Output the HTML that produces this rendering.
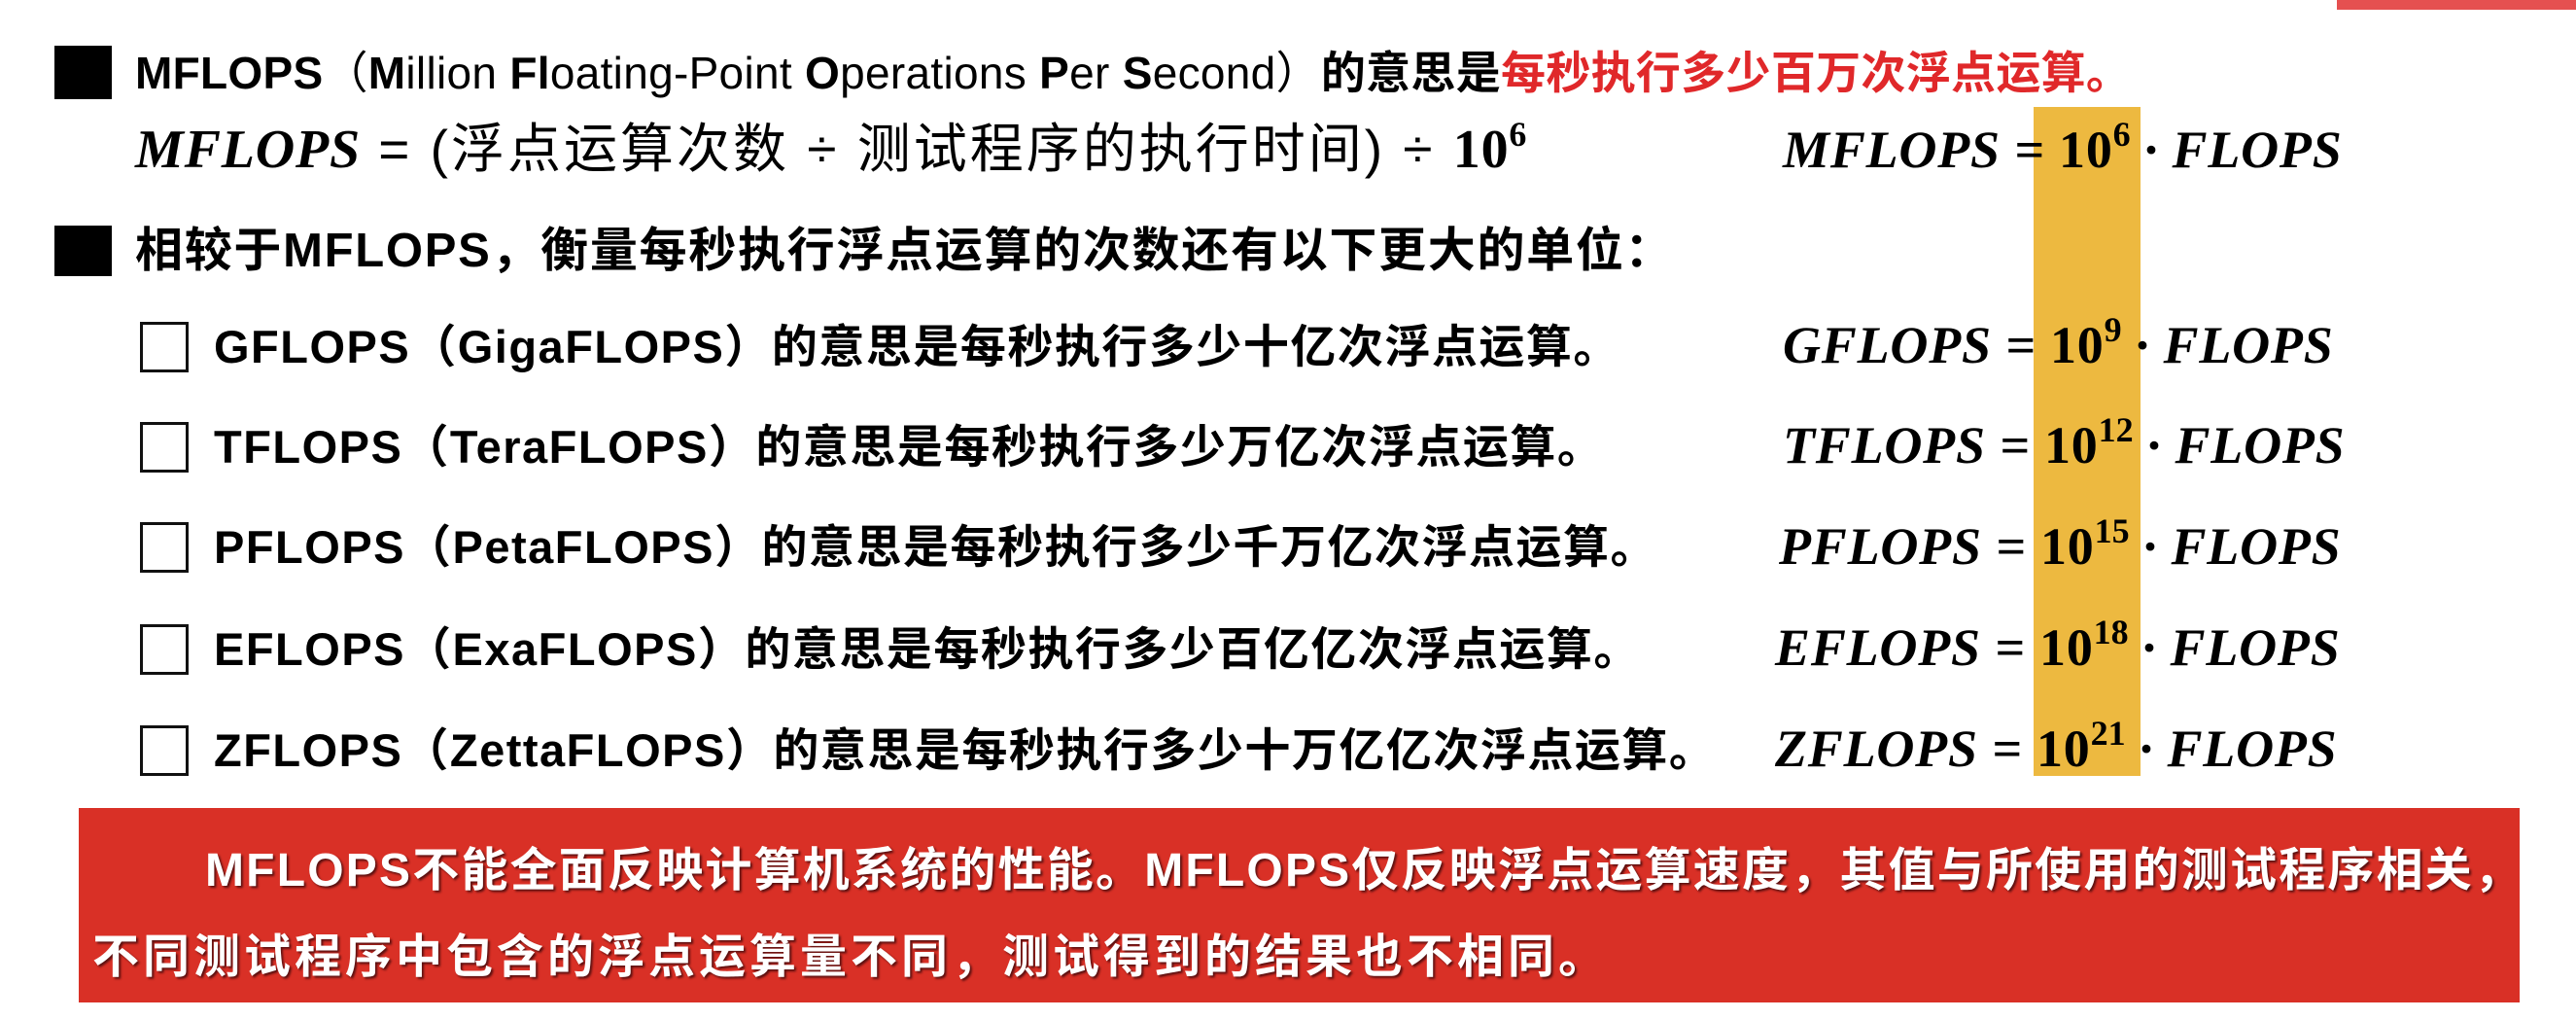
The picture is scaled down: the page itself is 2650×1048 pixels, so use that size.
<!DOCTYPE html>
<html><head><meta charset="utf-8"><style>
html,body{margin:0;padding:0;background:#fff;}
body{width:2650px;height:1048px;position:relative;overflow:hidden;font-family:"Liberation Sans","Noto Sans CJK SC",sans-serif;color:#000;}
.a{position:absolute;white-space:nowrap;}
.sq{position:absolute;background:#000;}
.cb{position:absolute;width:50px;height:52px;border:3px solid #111;box-sizing:border-box;}
.b{font-weight:bold;}
.m{font-family:"Liberation Serif","DejaVu Serif",serif;font-style:italic;font-weight:bold;font-size:54px;letter-spacing:0.8px;}
.m .n{font-style:normal;}
.m sup{font-size:36px;font-style:normal;vertical-align:0;position:relative;top:-22px;letter-spacing:0;}
</style></head><body>
<div style="position:absolute;left:2404px;top:0;width:246px;height:10px;background:#e55050"></div>
<div style="position:absolute;left:2092px;top:110px;width:110px;height:688px;background:#edb940"></div>

<div class="sq" style="left:56px;top:47px;width:59px;height:55px"></div>
<div class="a" style="left:139px;top:46px;font-size:46px;line-height:58px;letter-spacing:0.3px;"><b>MFLOPS</b>（<b>M</b>illion <b>Fl</b>oating-Point <b>O</b>perations <b>P</b>er <b>S</b>econd）<b>的意思是<span style="color:#e0282a">每秒执行多少百万次浮点运算。</span></b></div>

<div class="a" style="left:139px;top:118px;font-size:55px;line-height:70px;letter-spacing:3px;"><span class="m" style="font-size:56px">MFLOPS</span> = (浮点运算次数 ÷ 测试程序的执行时间) ÷ <span class="m" style="font-size:56px"><span class="n">10</span><sup>6</sup></span></div>
<div class="a m" style="left:1834px;top:122px;line-height:64px;">MFLOPS = <span class="n">10</span><sup>6</sup> · FLOPS</div>

<div class="sq" style="left:56px;top:232px;width:59px;height:52px"></div>
<div class="a b" style="left:139px;top:229px;font-size:49px;line-height:58px;letter-spacing:1.7px;">相较于MFLOPS，衡量每秒执行浮点运算的次数还有以下更大的单位：</div>

<div class="cb" style="left:144px;top:331px"></div>
<div class="a b" style="left:220px;top:328px;font-size:47px;line-height:58px;letter-spacing:1.5px;">GFLOPS（GigaFLOPS）的意思是每秒执行多少十亿次浮点运算。</div>
<div class="a m" style="left:1834px;top:323px;line-height:64px;">GFLOPS = <span class="n">10</span><sup>9</sup> · FLOPS</div>

<div class="cb" style="left:144px;top:434px"></div>
<div class="a b" style="left:220px;top:431px;font-size:47px;line-height:58px;letter-spacing:1.5px;">TFLOPS（TeraFLOPS）的意思是每秒执行多少万亿次浮点运算。</div>
<div class="a m" style="left:1834px;top:426px;line-height:64px;">TFLOPS = <span class="n">10</span><sup>12</sup> · FLOPS</div>

<div class="cb" style="left:144px;top:537px"></div>
<div class="a b" style="left:220px;top:534px;font-size:47px;line-height:58px;letter-spacing:1.5px;">PFLOPS（PetaFLOPS）的意思是每秒执行多少千万亿次浮点运算。</div>
<div class="a m" style="left:1830px;top:530px;line-height:64px;">PFLOPS = <span class="n">10</span><sup>15</sup> · FLOPS</div>

<div class="cb" style="left:144px;top:642px"></div>
<div class="a b" style="left:220px;top:639px;font-size:47px;line-height:58px;letter-spacing:1.5px;">EFLOPS（ExaFLOPS）的意思是每秒执行多少百亿亿次浮点运算。</div>
<div class="a m" style="left:1826px;top:634px;line-height:64px;">EFLOPS = <span class="n">10</span><sup>18</sup> · FLOPS</div>

<div class="cb" style="left:144px;top:746px"></div>
<div class="a b" style="left:220px;top:743px;font-size:47px;line-height:58px;letter-spacing:1.5px;">ZFLOPS（ZettaFLOPS）的意思是每秒执行多少十万亿亿次浮点运算。</div>
<div class="a m" style="left:1826px;top:738px;line-height:64px;">ZFLOPS = <span class="n">10</span><sup>21</sup> · FLOPS</div>

<div style="position:absolute;left:81px;top:831px;width:2511px;height:200px;background:#d93026;"></div>
<div class="a b" style="left:211px;top:866px;font-size:48px;line-height:60px;color:#fff;letter-spacing:2.2px;text-shadow:2px 2px 2px #5a1010;">MFLOPS不能全面反映计算机系统的性能。MFLOPS仅反映浮点运算速度，其值与所使用的测试程序相关，</div>
<div class="a b" style="left:95px;top:955px;font-size:48px;line-height:60px;color:#fff;letter-spacing:4px;text-shadow:2px 2px 2px #5a1010;">不同测试程序中包含的浮点运算量不同，测试得到的结果也不相同。</div>
</body></html>
